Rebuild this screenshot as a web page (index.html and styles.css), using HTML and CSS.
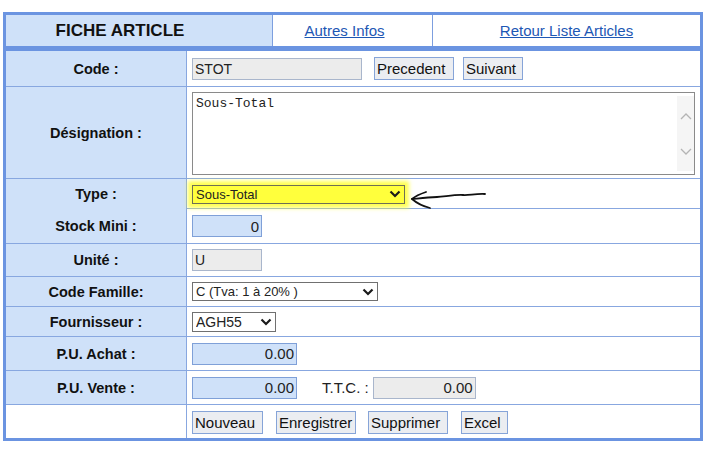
FILE: index.html
```html
<!DOCTYPE html>
<html lang="fr">
<head>
    <meta charset="UTF-8">
    <title>Fiche Article</title>
    <link rel="stylesheet" href="styles.css">
</head>
<body>
    <div class="sheet">
        <div class="sheet-head">
            <div class="head-title">FICHE ARTICLE</div>
            <div class="head-link head-link-infos"><a href="#">Autres Infos</a></div>
            <div class="head-link"><a href="#">Retour Liste Articles</a></div>
        </div>

        <div class="row row-code">
            <div class="label">Code :</div>
            <div class="value">
                <input class="field field-grey w-code" type="text" value="STOT">
                <button class="btn btn-prev">Precedent</button>
                <button class="btn btn-next">Suivant</button>
            </div>
        </div>

        <div class="row row-desig">
            <div class="label">Désignation :</div>
            <div class="value">
                <div class="memo">
                    <textarea class="memo-text">Sous-Total</textarea>
                    <div class="memo-bar">
                        <svg width="12" height="7" viewBox="0 0 12 7"><path d="M1 6 L6 1 L11 6" fill="none" stroke="#b4b4b4" stroke-width="1.3"/></svg>
                        <svg width="12" height="7" viewBox="0 0 12 7"><path d="M1 1 L6 6 L11 1" fill="none" stroke="#b4b4b4" stroke-width="1.3"/></svg>
                    </div>
                </div>
            </div>
        </div>

        <div class="row row-type">
            <div class="label">Type :</div>
            <div class="value">
                <span class="pick pick-marked">
                    <select class="choice w-type">
                        <option>Sous-Total</option>
                    </select>
                    <svg class="pick-arrow" width="12" height="8" viewBox="0 0 12 8"><path d="M1.5 1.5 L6 6 L10.5 1.5" fill="none" stroke="#1a1a1a" stroke-width="2.2"/></svg>
                </span>
                <!-- hand drawn pointer -->
                <svg class="scribble" width="80" height="30" viewBox="0 0 80 30">
                    <path d="M76 15 C 66 14.5, 60 16.5, 54 16 C 46 15.5, 36 17.5, 28 18 C 18 18.6, 10 19.4, 3 20" fill="none" stroke="#111" stroke-width="1.8" stroke-linecap="round"/>
                    <path d="M17 13 C 11 15, 6 17.5, 3 20 C 7 23.5, 13 27, 21 29" fill="none" stroke="#111" stroke-width="1.8" stroke-linecap="round" stroke-linejoin="round"/>
                </svg>
            </div>
        </div>

        <div class="row row-stock">
            <div class="label">Stock Mini :</div>
            <div class="value">
                <input class="field field-blue num w-short" type="text" value="0">
            </div>
        </div>

        <div class="row row-unit">
            <div class="label">Unité :</div>
            <div class="value">
                <input class="field field-grey w-short" type="text" value="U">
            </div>
        </div>

        <div class="row row-fam">
            <div class="label">Code Famille:</div>
            <div class="value">
                <span class="pick">
                    <select class="choice w-fam">
                        <option>C (Tva: 1 à 20% )</option>
                    </select>
                    <svg class="pick-arrow" width="12" height="8" viewBox="0 0 12 8"><path d="M1.5 1.5 L6 6 L10.5 1.5" fill="none" stroke="#1a1a1a" stroke-width="2.2"/></svg>
                </span>
            </div>
        </div>

        <div class="row row-four">
            <div class="label">Fournisseur :</div>
            <div class="value">
                <span class="pick">
                    <select class="choice w-four">
                        <option>AGH55</option>
                    </select>
                    <svg class="pick-arrow" width="12" height="8" viewBox="0 0 12 8"><path d="M1.5 1.5 L6 6 L10.5 1.5" fill="none" stroke="#1a1a1a" stroke-width="2.2"/></svg>
                </span>
            </div>
        </div>

        <div class="row row-achat">
            <div class="label">P.U. Achat :</div>
            <div class="value">
                <input class="field field-blue num w-price" type="text" value="0.00">
            </div>
        </div>

        <div class="row row-vente">
            <div class="label">P.U. Vente :</div>
            <div class="value">
                <input class="field field-blue num w-price" type="text" value="0.00">
                <span class="ttc">T.T.C. :</span>
                <input class="field field-grey num w-ttc" type="text" value="0.00">
            </div>
        </div>

        <div class="row row-actions">
            <div class="label label-empty"></div>
            <div class="value actions">
                <button class="btn b-new">Nouveau</button>
                <button class="btn b-save">Enregistrer</button>
                <button class="btn b-del">Supprimer</button>
                <button class="btn b-xls">Excel</button>
            </div>
        </div>
    </div>
</body>
</html>
```

FILE: styles.css
```css
* {
    margin: 0;
    padding: 0;
    box-sizing: border-box;
}

body {
    font-family: "Liberation Sans", Arial, sans-serif;
    background: #fff;
    color: #111;
}

.sheet {
    width: 700px;
    margin: 12px 0 0 3px;
    border: 3px solid #6b94e1;
}

/* top bar */
.sheet-head {
    display: grid;
    grid-template-columns: 266px 160px 1fr;
    height: 36px;
    border-bottom: 5px solid #6b94e1;
}

.head-title {
    background: #cfe1f9;
    font-weight: 700;
    font-size: 17px;
    display: flex;
    align-items: center;
    justify-content: center;
    padding-right: 38px;
}

.head-link {
    border-left: 1px solid #7d9fdf;
    display: flex;
    align-items: center;
    justify-content: center;
    font-size: 15px;
}

.head-link-infos {
    padding-right: 16px;
}

.head-link a {
    color: #1d57b4;
    text-decoration: underline;
}

/* form rows */
.row {
    display: grid;
    grid-template-columns: 181px 1fr;
    border-bottom: 1px solid #88a7e0;
}

.row:last-child {
    border-bottom: none;
}

.row-code { height: 36px; }
.row-desig { height: 92px; }
.row-type { height: 30px; }
.row-stock { height: 35px; }
.row-unit { height: 33px; }
.row-fam { height: 30px; }
.row-four { height: 30px; }
.row-achat { height: 34px; }
.row-vente { height: 34px; }
.row-actions { height: 33px; }

.label {
    background: #cfe1f9;
    border-right: 1px solid #88a7e0;
    font-weight: 700;
    font-size: 14.5px;
    display: flex;
    align-items: center;
    justify-content: center;
}

.label-empty {
    background: #fff;
}

.value {
    display: flex;
    align-items: center;
    padding-left: 5px;
}

/* inputs */
.field {
    height: 22px;
    font-family: "Liberation Sans", Arial, sans-serif;
    font-size: 14px;
    color: #222;
    padding: 0 2px;
    outline: none;
}

.field-grey {
    background: #ececec;
    border: 1px solid #a9b6cc;
}

.field-blue {
    background: #cfe1f9;
    border: 1px solid #7fa0d8;
}

.num {
    text-align: right;
    font-size: 15px;
}

.w-code { width: 170px; }
.w-short { width: 70px; }
.w-price { width: 105px; }
.w-ttc { width: 103px; }

.ttc {
    font-size: 15px;
    color: #222;
    margin: 0 4px 0 25px;
}

.btn {
    height: 23px;
    font-family: "Liberation Sans", Arial, sans-serif;
    font-size: 15px;
    color: #111;
    background: #ebedf1;
    border: 1px solid #86a4d8;
    padding: 0 0 0 2px;
    text-align: left;
    white-space: nowrap;
}

.btn-prev {
    width: 80px;
    margin-left: 12px;
}

.btn-next {
    width: 60px;
    margin-left: 9px;
}

.actions {
    padding-top: 1px;
}

.b-new { width: 71px; }
.b-save { width: 80px; margin-left: 13px; }
.b-del { width: 80px; margin-left: 12px; }
.b-xls { width: 47px; margin-left: 13px; }

/* designation memo */
.memo {
    display: flex;
    width: 503px;
    height: 83px;
    margin-top: 2px;
    border: 1px solid #8a8a8a;
    background: #fff;
}

.memo-text {
    flex: 1;
    border: none;
    resize: none;
    outline: none;
    overflow: hidden;
    font-family: "Liberation Mono", "Courier New", monospace;
    font-size: 13px;
    color: #222;
    padding: 3px 3px;
}

.memo-bar {
    width: 17px;
    margin: 3px 0;
    background: #f5f5f5;
    display: flex;
    flex-direction: column;
    align-items: center;
    justify-content: space-between;
    padding: 17px 0 16px;
}

/* drop-down lists */
.pick {
    display: inline-flex;
    align-items: center;
}

.choice {
    appearance: none;
    -webkit-appearance: none;
    height: 19px;
    font-family: "Liberation Sans", Arial, sans-serif;
    font-size: 13px;
    color: #222;
    background: #fff;
    border: 1px solid #707070;
    border-radius: 0;
    padding: 0 18px 0 3px;
    outline: none;
}

.pick-arrow {
    margin-left: -16px;
    pointer-events: none;
}

.w-type { width: 213px; }
.w-fam { width: 186px; }
.w-four { width: 84px; height: 20px; font-size: 14px; }

.pick-marked .choice {
    background: #ffff3c;
    border-color: #6f6f55;
    box-shadow: 0 0 4px 4px rgba(255, 255, 40, 0.8);
}

.scribble {
    align-self: flex-start;
    margin-left: 8px;
    overflow: visible;
}
```
